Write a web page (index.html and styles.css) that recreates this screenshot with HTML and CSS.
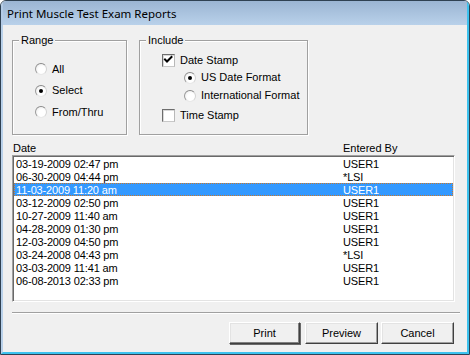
FILE: index.html
```html
<!DOCTYPE html>
<html>
<head>
<meta charset="utf-8">
<title>Print Muscle Test Exam Reports</title>
<link rel="stylesheet" href="styles.css">
</head>
<body>
<div class="window">
  <div class="titlebar"><span class="title">Print Muscle Test Exam Reports</span></div>
  <div class="client">
    <div class="groups">
      <fieldset class="group group-range">
        <legend>Range</legend>
        <div class="range-options">
          <label class="opt"><span class="radio"></span>All</label>
          <label class="opt"><span class="radio checked"></span>Select</label>
          <label class="opt"><span class="radio"></span>From/Thru</label>
        </div>
      </fieldset>
      <fieldset class="group group-include">
        <legend>Include</legend>
        <div class="include-options">
          <label class="opt opt-date"><span class="check"><svg width="11" height="11" viewBox="0 0 11 11"><path d="M2 4.5 L4 6.5 L8.5 2" fill="none" stroke="#000" stroke-width="2" stroke-linecap="square"/></svg></span>Date Stamp</label>
          <label class="opt opt-sub opt-us"><span class="radio checked"></span>US Date Format</label>
          <label class="opt opt-sub opt-intl"><span class="radio"></span>International Format</label>
          <label class="opt opt-time"><span class="check"></span>Time Stamp</label>
        </div>
      </fieldset>
    </div>
    <div class="list-head"><span>Date</span><span>Entered By</span></div>
    <div class="list">
      <div class="row"><span>03-19-2009 02:47 pm</span><span>USER1</span></div>
      <div class="row"><span>06-30-2009 04:44 pm</span><span>*LSI</span></div>
      <div class="row selected"><span>11-03-2009 11:20 am</span><span>USER1</span></div>
      <div class="row"><span>03-12-2009 02:50 pm</span><span>USER1</span></div>
      <div class="row"><span>10-27-2009 11:40 am</span><span>USER1</span></div>
      <div class="row"><span>04-28-2009 01:30 pm</span><span>USER1</span></div>
      <div class="row"><span>12-03-2009 04:50 pm</span><span>USER1</span></div>
      <div class="row"><span>03-24-2008 04:43 pm</span><span>*LSI</span></div>
      <div class="row"><span>03-03-2009 11:41 am</span><span>USER1</span></div>
      <div class="row"><span>06-08-2013 02:33 pm</span><span>USER1</span></div>
    </div>
    <div class="separator"></div>
    <div class="buttons">
      <button class="btn btn-default">Print</button>
      <button class="btn btn-preview">Preview</button>
      <button class="btn btn-cancel">Cancel</button>
    </div>
  </div>
</div>
</body>
</html>
```
FILE: styles.css
```css
* { box-sizing: border-box; }
html, body { margin: 0; padding: 0; }
body {
  width: 470px;
  height: 355px;
  overflow: hidden;
  background: #fff;
  font: 11px/13px "Liberation Sans", Arial, sans-serif;
  color: #000;
}
.window {
  width: 470px;
  height: 355px;
  border: 1px solid #2f4152;
  border-radius: 6px 6px 0 0;
  display: flex;
  flex-direction: column;
  overflow: hidden;
  background: #f0f0f0;
}
.titlebar {
  height: 24px;
  flex: none;
  display: flex;
  align-items: center;
  padding-left: 4px;
  background: linear-gradient(#9bb5d3, #b9d1ea);
  border-right: 2px solid #3cc2ee;
  border-left: 2px solid #b3cbe6;
}
.title {
  font: 11.5px/14px "Noto Sans", "Open Sans", sans-serif;
  color: #000;
  padding-top: 1px;
}
.client {
  flex: 1;
  display: flex;
  flex-direction: column;
  background: #f0f0f0;
  border-left: 2px solid #b9d1ea;
  border-right: 2px solid #3cc2ee;
  border-bottom: 2px solid #3cc2ee;
  padding: 0 7px 0 9px;
}
.groups {
  display: flex;
  gap: 12px;
  margin-top: 9px;
}
.group {
  margin: 0;
  padding: 0;
  min-inline-size: 0;
  border: 1px solid #a0a0a0;
  box-shadow: 1px 1px 0 #fff, inset 1px 1px 0 #fff;
}
.group legend {
  margin-left: 6px;
  padding: 0 2px;
  line-height: 13px;
  background: #f0f0f0;
}
.group-range { width: 115px; }
.group-include { width: 169px; }
.range-options {
  height: 87px;
  padding: 15.5px 0 0 22px;
  display: flex;
  flex-direction: column;
  gap: 8.5px;
}
.include-options {
  height: 87px;
  padding: 7px 0 0 22px;
  display: flex;
  flex-direction: column;
}
.opt {
  display: flex;
  align-items: center;
  gap: 5px;
  height: 13px;
  white-space: nowrap;
}
.opt-sub { margin-left: 22px; }
.opt-us { margin-top: 4px; }
.opt-intl { margin-top: 5px; }
.opt-time { margin-top: 7px; }
.radio {
  flex: none;
  width: 12px;
  height: 12px;
  border-radius: 50%;
  border: 1px solid;
  border-color: #8a8a8a #d4d4d4 #e8e8e8 #9a9a9a;
  background: radial-gradient(circle at 60% 60%, #ffffff 40%, #e6e6e6 100%);
  position: relative;
}
.radio.checked::after {
  content: "";
  position: absolute;
  left: 3px;
  top: 3px;
  width: 4px;
  height: 4px;
  border-radius: 50%;
  background: #000;
}
.check {
  flex: none;
  width: 13px;
  height: 13px;
  border: 1px solid;
  border-color: #6d6d6d #b8b8b8 #c8c8c8 #6d6d6d;
  background: #fff;
  box-shadow: inset 1px 1px 0 #d8d8d8;
  display: flex;
  align-items: center;
  justify-content: center;
}
.check svg { display: block; }
.list-head {
  display: grid;
  grid-template-columns: 330px 1fr;
  padding-left: 1px;
  margin-top: 7px;
  height: 13px;
}
.list {
  width: 443px;
  height: 147px;
  background: #fff;
  border: 1px solid;
  border-color: #a0a0a0 #fff #fff #a0a0a0;
  box-shadow: inset 1px 1px 0 #696969, inset -1px -1px 0 #e3e3e3;
  padding: 1px;
}
.row {
  display: grid;
  grid-template-columns: 327px 1fr;
  height: 13px;
  line-height: 14px;
  padding-left: 2px;
  letter-spacing: -0.15px;
}
.row.selected {
  background: #3399ff;
  color: #fff;
  outline: 1px dotted #c9782c;
  outline-offset: -1px;
}
.separator {
  width: 448px;
  height: 2px;
  margin-top: 10px;
  border-top: 1px solid #a0a0a0;
  border-bottom: 1px solid #fff;
}
.buttons {
  display: flex;
  justify-content: flex-end;
  margin-top: 8px;
  padding-right: 6px;
}
.btn {
  height: 22px;
  width: 73px;
  padding: 0;
  font: 11px/13px "Liberation Sans", Arial, sans-serif;
  color: #000;
  background: #f0f0f0;
  border: 1px solid;
  border-color: #fff #404040 #404040 #fff;
  box-shadow: inset -1px -1px 0 #a0a0a0, inset 1px 1px 0 #e3e3e3;
}
.btn-default {
  width: 71px;
  margin-right: 5px;
  box-shadow: inset -1px -1px 0 #808080, inset 1px 1px 0 #e3e3e3, 1px 1px 0 #696969;
}
.btn-preview { margin-right: 3px; }
```
